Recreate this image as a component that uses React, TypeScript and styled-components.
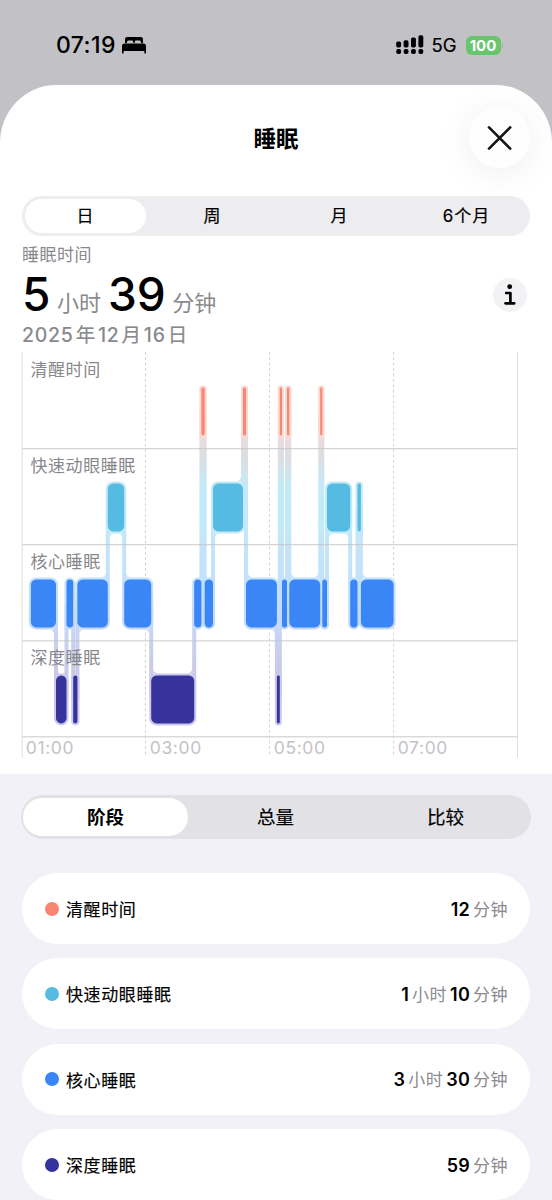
import styled, { createGlobalStyle, css } from 'styled-components'

type StageKey = 'awake' | 'rem' | 'core' | 'deep'

const STAGE: Record<StageKey, { label: string; color: string; top: number }> = {
	awake: { label: '清醒时间', color: '#f98673', top: 387.4 },
	rem: { label: '快速动眼睡眠', color: '#56bbe3', top: 483.4 },
	core: { label: '核心睡眠', color: '#3a86f7', top: 579.4 },
	deep: { label: '深度睡眠', color: '#36339d', top: 675.4 },
}

// every segment ends where the next one starts
const START = 30.9
const SEGMENTS: [StageKey, number][] = [
	['core', 56],
	['deep', 66.5],
	['core', 73.2],
	['deep', 77.4],
	['core', 107.8],
	['rem', 124.2],
	['core', 151.2],
	['deep', 194.2],
	['core', 201.4],
	['awake', 204.7],
	['core', 213],
	['rem', 243],
	['awake', 246],
	['core', 276.9],
	['deep', 279.8],
	['awake', 282],
	['core', 287],
	['awake', 289.3],
	['core', 320.2],
	['awake', 322.3],
	['core', 327],
	['rem', 350.2],
	['core', 357.5],
	['rem', 360.9],
	['core', 393.6],
]

const BAR_H = 48
const PAD = 2

const BARS = SEGMENTS.map(([stage, end], i) => {
	const x = i === 0 ? START : SEGMENTS[i - 1][1]
	return { stage, x, w: end - x, y: STAGE[stage].top }
})

const DETAILS: { stage: StageKey; hour?: number; minute: number }[] = [
	{ stage: 'awake', minute: 12 },
	{ stage: 'rem', hour: 1, minute: 10 },
	{ stage: 'core', hour: 3, minute: 30 },
	{ stage: 'deep', minute: 59 },
]

const GlobalStyle = createGlobalStyle`
	* {
		box-sizing: border-box;
	}
	body {
		margin: 0;
		background: #c2c1c6;
	}
	button {
		border: 0;
		padding: 0;
		font: inherit;
		color: inherit;
	}
	b, i {
		font-style: normal;
	}
`

const FlexCenterCSS = css`
	display: flex;
	align-items: center;
	justify-content: center;
`

const Screen = styled.div`
	width: 552px;
	height: 1200px;
	overflow: hidden;
	background: #c2c1c6;
	color: #000;
	font-family: Inter, 'Noto Sans CJK SC', sans-serif;
`
const Status = styled.div`
	height: 85px;
	padding: 5px 49px 0 56px;
	display: flex;
	align-items: center;
`
const Clock = styled.span`
	margin-right: 6px;
	font-size: 23px;
	font-weight: 550;
	letter-spacing: 0.4px;
	line-height: 28px;
	padding-bottom: 1px;
`
const Spacer = styled.div`
	flex: 1;
`
const Network = styled.span`
	width: 34px;
	padding-left: 8px;
	font-size: 18.5px;
	letter-spacing: -0.1px;
	-webkit-text-stroke: 0.2px #000;
`
const Battery = styled.span`
	${FlexCenterCSS}
	width: 35px;
	height: 19px;
	margin-left: 8px;
	border-radius: 6px;
	background: #67c56b;
	color: #fff;
	font-size: 15px;
	font-weight: 700;
`
const BatteryCap = styled.span`
	width: 1.5px;
	height: 5px;
	margin-left: 1px;
	border-radius: 0 2px 2px 0;
	background: #8fb795;
`
const Sheet = styled.main`
	height: 1115px;
	overflow: hidden;
	background: #fff;
	border-radius: 56px 56px 0 0 / 58px 58px 0 0;
`
const Header = styled.header`
	height: 111px;
	padding: 22px 22px 0;
	display: grid;
	grid-template-columns: 61px 1fr 61px;
	align-items: start;
`
const Title = styled.h1`
	grid-column: 2;
	margin: 0;
	line-height: 63px;
	font-size: 22.5px;
	font-weight: 600;
	text-align: center;
`
const Close = styled.button`
	${FlexCenterCSS}
	width: 61px;
	height: 61px;
	border-radius: 50%;
	background: #fefefe;
	box-shadow: 0 4px 36px rgba(0, 0, 0, 0.07);
`
const RangeTabs = styled.div`
	display: grid;
	grid-template-columns: repeat(4, 1fr);
	height: 40px;
	margin: 0 22px;
	padding: 3px 0;
	border-radius: 20px;
	background: #ededef;
`
const RangeTab = styled.button<{ $active: boolean }>`
	margin: 0 3px;
	padding-top: 1px;
	border-radius: 18px;
	background: ${({ $active }) => ($active ? '#fff' : 'transparent')};
	font-size: 17px;
	line-height: 33px;
	letter-spacing: 1px;
	-webkit-text-stroke: 0.2px #000;
`
const Summary = styled.section`
	display: flex;
	justify-content: space-between;
	height: 116px;
	padding: 6px 25px 0 22px;
`
const Caption = styled.div`
	height: 26px;
	line-height: 27px;
	font-size: 17px;
	letter-spacing: 0.5px;
	color: #89898d;
`
const Total = styled.div`
	display: flex;
	align-items: baseline;
	height: 54px;
	line-height: 52px;
`
const TotalNumber = styled.b`
	font-size: 46px;
	font-weight: 500;
`
const TotalUnit = styled.span`
	margin: 0 7px 0 6.5px;
	font-size: 22px;
	color: #8a8a8e;
`
const DateText = styled.div`
	line-height: 26px;
	font-size: 19.5px;
	font-weight: 450;
	letter-spacing: 0.75px;
	color: #89898d;
	i {
		margin: 0 2px;
		font-weight: 400;
		-webkit-text-stroke: 0.2px #89898d;
	}
`
const Info = styled.button`
	${FlexCenterCSS}
	width: 34px;
	height: 34px;
	margin-top: 36px;
	border-radius: 50%;
	background: #f2f2f5;
`
const Chart = styled.svg`
	display: block;
	width: 552px;
	height: 406px;
`
const StageText = styled.text`
	font-size: 17px;
	letter-spacing: 0.55px;
	fill: #88888c;
`
const TimeText = styled.text`
	font-size: 17.5px;
	letter-spacing: 0.6px;
	fill: #c3c3c7;
`
const Details = styled.section`
	height: 430px;
	margin-top: 16px;
	padding: 21px 22px 0;
	background: #f2f1f8;
`
const ViewTabs = styled.div`
	display: grid;
	grid-template-columns: repeat(3, 1fr);
	height: 44px;
	margin: 0 -1px;
	padding: 3px 0;
	border-radius: 22px;
	background: #e2e1e6;
`
const ViewTab = styled.button<{ $active: boolean }>`
	margin: 0 3px 0 2px;
	padding-top: 1px;
	border-radius: 19px;
	background: ${({ $active }) => ($active ? '#fff' : 'transparent')};
	font-size: 18.5px;
	font-weight: ${({ $active }) => ($active ? 600 : 400)};
	line-height: 37px;
	-webkit-text-stroke: ${({ $active }) => ($active ? 0 : '0.2px')} #000;
`
const List = styled.div`
	display: flex;
	flex-direction: column;
	gap: 14.3px;
	margin-top: 34.2px;
`
const Row = styled.div`
	display: flex;
	align-items: center;
	flex: none;
	height: 71px;
	padding: 0 22px 0 23px;
	border-radius: 36px;
	background: #fff;
`
const Dot = styled.span<{ $color: string }>`
	width: 14px;
	height: 14px;
	margin-right: 7px;
	border-radius: 50%;
	background: ${({ $color }) => $color};
`
const RowLabel = styled.span`
	flex: 1;
	font-size: 17px;
	letter-spacing: 0.6px;
	-webkit-text-stroke: 0.15px #000;
`
const Value = styled.span`
	display: flex;
	align-items: baseline;
	padding-bottom: 1px;
`
const ValueNumber = styled.b`
	margin: 0 3px 0 3px;
	font-size: 18px;
	font-weight: 600;
	letter-spacing: 0.2px;
`
const ValueUnit = styled.span`
	font-size: 17px;
	letter-spacing: 0.5px;
	color: #8a8a8e;
`

// rounded inner corner between a connector and the bar it leaves
const fillet = (x: number, y: number, dx: number, dy: number, r: number) =>
	`M${x} ${y}h${dx * r}a${r} ${r} 0 0 ${dx * dy > 0 ? 0 : 1} ${-dx * r} ${dy * r}z`

function Halo() {
	return (
		<g fill="url(#halo)">
			{BARS.map((bar, i) => (
				<rect
					key={i}
					x={bar.x - PAD}
					y={bar.y - PAD}
					width={bar.w + PAD * 2}
					height={BAR_H + PAD * 2}
					rx={Math.min(7, bar.w / 2 + PAD)}
				/>
			))}
			{BARS.slice(1).map((bar, i) => {
				const prev = BARS[i]
				const down = bar.y > prev.y
				const upper = down ? prev : bar
				const lower = down ? bar : prev
				const side = down ? -1 : 1
				const ru = Math.min(5, (upper.w - PAD * 2) / 2)
				const rl = Math.min(5, (lower.w - PAD * 2) / 2)
				const bottom = upper.y + BAR_H + PAD
				const top = lower.y - PAD
				return (
					<g key={i}>
						<rect
							x={bar.x - PAD}
							y={upper.y + BAR_H / 2}
							width={PAD * 2}
							height={lower.y - upper.y}
						/>
						{ru > 0 && <path d={fillet(bar.x + side * PAD, bottom, side, 1, ru)} />}
						{rl > 0 && <path d={fillet(bar.x - side * PAD, top, -side, -1, rl)} />}
					</g>
				)
			})}
		</g>
	)
}

function SleepChart() {
	return (
		<Chart viewBox="0 352 552 406">
			<defs>
				<linearGradient
					id="halo"
					gradientUnits="userSpaceOnUse"
					x1="0"
					y1="385"
					x2="0"
					y2="725"
				>
					<stop offset="0" stopColor="#fdd6ce" />
					<stop offset="0.145" stopColor="#fad9d3" />
					<stop offset="0.165" stopColor="#e9dcde" />
					<stop offset="0.21" stopColor="#dddde2" />
					<stop offset="0.3" stopColor="#c2ebf7" />
					<stop offset="0.42" stopColor="#c1eafa" />
					<stop offset="0.47" stopColor="#c5e4f8" />
					<stop offset="0.57" stopColor="#c2e2fb" />
					<stop offset="0.7" stopColor="#c3dafa" />
					<stop offset="0.74" stopColor="#c8d3f1" />
					<stop offset="0.83" stopColor="#cac9e8" />
					<stop offset="1" stopColor="#cbc9ea" />
				</linearGradient>
			</defs>
			<Halo />
			<g stroke="#c3c3c6" strokeOpacity="0.9">
				{[448.7, 544.7, 640.9, 736.8].map((y) => (
					<line key={y} x1="22" x2="518" y1={y} y2={y} />
				))}
			</g>
			<g stroke="#dedee0">
				<line x1="22.2" x2="22.2" y1="352" y2="758" />
				<line x1="517.5" x2="517.5" y1="352" y2="758" />
			</g>
			<g stroke="#d2d2d5" strokeDasharray="2.7 2.7">
				{[145.5, 269.5, 393.6].map((x) => (
					<line key={x} x1={x} x2={x} y1="352" y2="757" />
				))}
			</g>
			{BARS.map((bar, i) => (
				<rect
					key={i}
					x={bar.x}
					y={bar.y}
					width={bar.w}
					height={BAR_H}
					rx={Math.min(5.5, bar.w / 2)}
					fill={STAGE[bar.stage].color}
				/>
			))}
			{Object.values(STAGE).map(({ label, top }) => (
				<StageText key={label} x="30.5" y={top - 11.4}>
					{label}
				</StageText>
			))}
			{['01:00', '03:00', '05:00', '07:00'].map((time, i) => (
				<TimeText key={time} x={25.8 + i * 124} y="754">
					{time}
				</TimeText>
			))}
		</Chart>
	)
}

function StatusBar() {
	return (
		<Status>
			<Clock>07:19</Clock>
			<svg width="24" height="17" viewBox="0 0 24 17">
				<path d="M3 6V2.2Q3 0 5.2 0H18.8Q21 0 21 2.2V6H19V5Q19 3.4 17.4 3.4H14.2Q12.8 3.4 12.8 4.7V6H11.2V4.7Q11.2 3.4 9.8 3.4H6.6Q5 3.4 5 5V6Z" />
				<path d="M2.6 6.6H21.4Q24 6.6 24 9.2V15.8Q24 16.4 23.4 16.4H22.9Q22.3 16.4 22.3 15.8V14H1.7V15.8Q1.7 16.4 1.1 16.4H.6Q0 16.4 0 15.8V9.2Q0 6.6 2.6 6.6Z" />
			</svg>
			<Spacer />
			<svg width="28" height="20" viewBox="0 0 28 20">
				{[6.6, 5.2, 2.6, 0.3].map((y, i) => (
					<g key={y}>
						<rect
							x={0.2 + i * 7.4}
							y={y}
							width="4.9"
							height={12.5 - y}
							rx="1.7"
						/>
						<rect
							x={0.2 + i * 7.4}
							y="14"
							width="4.9"
							height="5"
							rx="2"
						/>
					</g>
				))}
			</svg>
			<Network>5G</Network>
			<Battery>100</Battery>
			<BatteryCap />
		</Status>
	)
}

function App() {
	return (
		<Screen>
			<GlobalStyle />
			<StatusBar />
			<Sheet>
				<Header>
					<Title>睡眠</Title>
					<Close aria-label="关闭">
						<svg width="26" height="26" viewBox="0 0 26 26">
							<path
								d="M2 2.4 23.2 23.6M23.2 2.4 2 23.6"
								fill="none"
								stroke="#161616"
								strokeWidth="2.7"
								strokeLinecap="round"
							/>
						</svg>
					</Close>
				</Header>
				<RangeTabs>
					{['日', '周', '月', '6个月'].map((name, i) => (
						<RangeTab key={name} $active={i === 0}>
							{name}
						</RangeTab>
					))}
				</RangeTabs>
				<Summary>
					<div>
						<Caption>睡眠时间</Caption>
						<Total>
							<TotalNumber>5</TotalNumber>
							<TotalUnit>小时</TotalUnit>
							<TotalNumber>39</TotalNumber>
							<TotalUnit>分钟</TotalUnit>
						</Total>
						<DateText>
							2025<i>年</i>12<i>月</i>16<i>日</i>
						</DateText>
					</div>
					<Info aria-label="信息">
						<svg width="12" height="22" viewBox="0 0 12 22">
							<circle cx="5.7" cy="2.7" r="2.4" />
							<path
								d="M2.2 9H6.4V19M1.5 19.3H10.2"
								fill="none"
								stroke="#000"
								strokeWidth="2.7"
								strokeLinecap="round"
								strokeLinejoin="round"
							/>
						</svg>
					</Info>
				</Summary>
				<SleepChart />
				<Details>
					<ViewTabs>
						{['阶段', '总量', '比较'].map((name, i) => (
							<ViewTab key={name} $active={i === 0}>
								{name}
							</ViewTab>
						))}
					</ViewTabs>
					<List>
						{DETAILS.map(({ stage, hour, minute }) => (
							<Row key={stage}>
								<Dot $color={STAGE[stage].color} />
								<RowLabel>{STAGE[stage].label}</RowLabel>
								<Value>
									{hour && (
										<>
											<ValueNumber>{hour}</ValueNumber>
											<ValueUnit>小时</ValueUnit>
										</>
									)}
									<ValueNumber>{minute}</ValueNumber>
									<ValueUnit>分钟</ValueUnit>
								</Value>
							</Row>
						))}
					</List>
				</Details>
			</Sheet>
		</Screen>
	)
}
export default App
